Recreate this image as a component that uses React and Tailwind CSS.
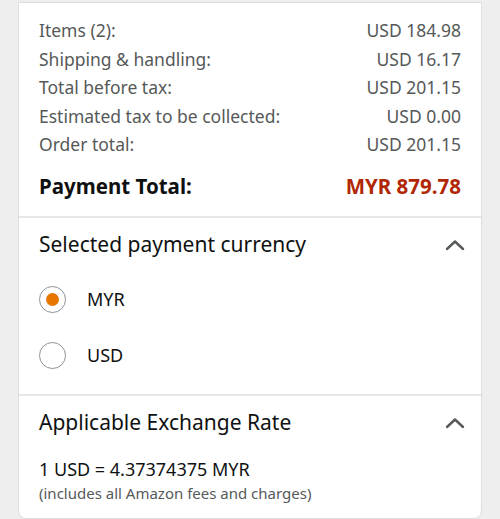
import { useState } from "react";

const rows = [
  ["Items (2):", "USD 184.98"],
  ["Shipping & handling:", "USD 16.17"],
  ["Total before tax:", "USD 201.15"],
  ["Estimated tax to be collected:", "USD 0.00"],
  ["Order total:", "USD 201.15"],
];

const Chevron = () => (
  <svg width="20" height="12" viewBox="0 0 20 12" fill="none">
    <path d="M2 10 L10 2.5 L18 10" stroke="#565959" strokeWidth="2.4" strokeLinecap="round" strokeLinejoin="round" />
  </svg>
);

const Radio = ({ checked, label, onClick }) => (
  <button onClick={onClick} className="flex items-center h-[56px] w-full text-left">
    <span className="w-[27px] h-[27px] rounded-full border-[1.5px] border-[#8d9096] flex items-center justify-center bg-white">
      {checked && <span className="w-[13px] h-[13px] rounded-full bg-[#e77600]" />}
    </span>
    <span className="ml-[21px] text-[18px] text-[#0f1111]">{label}</span>
  </button>
);

export default function App() {
  const [currency, setCurrency] = useState("MYR");

  return (
    <div className="min-h-[519px] bg-[#eeeeee] px-[18px] pt-[2px] font-['Noto_Sans',sans-serif]">
      <div className="bg-white border border-[#dddddd] rounded-b-lg">
        {/* order summary */}
        <div className="px-[20px] pt-[13px] pb-[16px] border-b-2 border-[#e7e7e7]">
          {rows.map(([label, value]) => (
            <div key={label} className="flex justify-between leading-[28.6px] text-[17.5px] text-[#565959]">
              <span>{label}</span>
              <span>{value}</span>
            </div>
          ))}
          <div className="flex justify-between mt-[13px] leading-[28px] text-[20.5px] font-bold">
            <span className="text-[#0f1111]">Payment Total:</span>
            <span className="text-[#b12704]">MYR 879.78</span>
          </div>
        </div>

        {/* currency */}
        <div className="px-[20px] pt-[13px] pb-[10px] border-b-2 border-[#e7e7e7]">
          <div className="flex items-center justify-between h-[28px]">
            <span className="text-[21px] text-[#0f1111]">Selected payment currency</span>
            <span className="mr-[-4px]"><Chevron /></span>
          </div>
          <div className="mt-[13px]">
            <Radio checked={currency === "MYR"} label="MYR" onClick={() => setCurrency("MYR")} />
            <Radio checked={currency === "USD"} label="USD" onClick={() => setCurrency("USD")} />
          </div>
        </div>

        {/* exchange rate */}
        <div className="px-[20px] pt-[13px] pb-[14px]">
          <div className="flex items-center justify-between h-[28px]">
            <span className="text-[21px] text-[#0f1111]">Applicable Exchange Rate</span>
            <span className="mr-[-4px]"><Chevron /></span>
          </div>
          <div className="mt-[20px] text-[18px] leading-[25px] text-[#0f1111]">1 USD = 4.37374375 MYR</div>
          <div className="text-[15px] leading-[22px] text-[#565959]">(includes all Amazon fees and charges)</div>
        </div>
      </div>
    </div>
  );
}
